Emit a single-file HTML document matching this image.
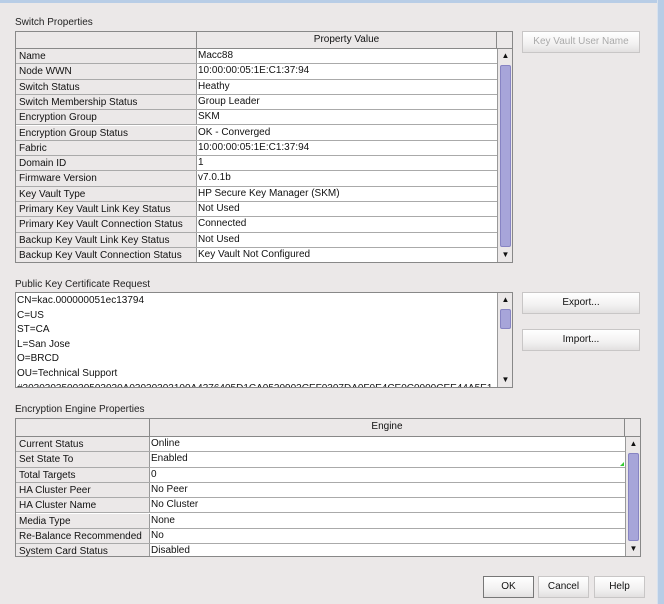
<!DOCTYPE html>
<html><head><style>
body{margin:0;width:664px;height:604px;background:#ebe8e8;position:relative;overflow:hidden;font-family:"Liberation Sans",sans-serif;font-size:10px;color:#111}
.a{position:absolute}
.lbl{position:absolute;font-size:10px;color:#222}
.tbl{position:absolute;border:1px solid #888;background:#fff;overflow:hidden}
.hdr{position:absolute;left:0;top:0;height:16px;background:#ebe8e8;border-bottom:1px solid #888;text-align:center;line-height:16px}
.row{position:absolute;left:0;height:15.3px;box-sizing:border-box;border-bottom:1px solid #aaa;line-height:14px;white-space:nowrap}
.n{position:absolute;left:0;top:0;bottom:0;background:#ebe8e8;border-right:1px solid #999;padding-left:3px;box-sizing:border-box;padding-top:1px}
.v{position:absolute;top:0;bottom:0;padding-left:1px}
.sb{position:absolute;background:#ebe8e8;border-left:1px solid #999}
.thumb{position:absolute;left:2px;right:2px;background:#a7a5d9;border:1px solid #8784c3;border-radius:2px}
.arr{position:absolute;left:0;right:0;height:14px;font-size:8px;text-align:center;line-height:14px}
.btn{position:absolute;background:linear-gradient(#fff,#f2f1f1 60%,#e2e0e0);border:1px solid #c8c6c6;text-align:center;font-size:10px;box-sizing:border-box}
</style></head><body>
<div class="a" style="left:0;top:0;width:664px;height:3px;background:#b8cde6"></div>
<div class="a" style="left:657px;top:0;width:7px;height:604px;background:#b8cde6;border-left:1px solid #d8e2ee"></div>

<div class="lbl" style="left:15px;top:17px">Switch Properties</div>
<div class="tbl" style="left:15px;top:31px;width:496px;height:230px">
<div class="hdr" style="width:180px;border-right:1px solid #888"></div>
<div class="hdr" style="left:181px;width:299px;border-right:1px solid #888">Property Value</div>
<div class="hdr" style="left:481px;width:16px"></div>
<div style="position:absolute;left:0;top:17px;width:481px">
<div class="row" style="top:0;width:481px"><div class="n" style="width:181px">Name</div><div class="v" style="left:181px">Macc88</div></div>
<div class="row" style="top:15.3px;width:481px"><div class="n" style="width:181px">Node WWN</div><div class="v" style="left:181px">10:00:00:05:1E:C1:37:94</div></div>
<div class="row" style="top:30.6px;width:481px"><div class="n" style="width:181px">Switch Status</div><div class="v" style="left:181px">Heathy</div></div>
<div class="row" style="top:45.9px;width:481px"><div class="n" style="width:181px">Switch Membership Status</div><div class="v" style="left:181px">Group Leader</div></div>
<div class="row" style="top:61.2px;width:481px"><div class="n" style="width:181px">Encryption Group</div><div class="v" style="left:181px">SKM</div></div>
<div class="row" style="top:76.5px;width:481px"><div class="n" style="width:181px">Encryption Group Status</div><div class="v" style="left:181px">OK - Converged</div></div>
<div class="row" style="top:91.8px;width:481px"><div class="n" style="width:181px">Fabric</div><div class="v" style="left:181px">10:00:00:05:1E:C1:37:94</div></div>
<div class="row" style="top:107.1px;width:481px"><div class="n" style="width:181px">Domain ID</div><div class="v" style="left:181px">1</div></div>
<div class="row" style="top:122.4px;width:481px"><div class="n" style="width:181px">Firmware Version</div><div class="v" style="left:181px">v7.0.1b</div></div>
<div class="row" style="top:137.7px;width:481px"><div class="n" style="width:181px">Key Vault Type</div><div class="v" style="left:181px">HP Secure Key Manager (SKM)</div></div>
<div class="row" style="top:153px;width:481px"><div class="n" style="width:181px">Primary Key Vault Link Key Status</div><div class="v" style="left:181px">Not Used</div></div>
<div class="row" style="top:168.3px;width:481px"><div class="n" style="width:181px">Primary Key Vault Connection Status</div><div class="v" style="left:181px">Connected</div></div>
<div class="row" style="top:183.6px;width:481px"><div class="n" style="width:181px">Backup Key Vault Link Key Status</div><div class="v" style="left:181px">Not Used</div></div>
<div class="row" style="top:198.9px;width:481px;border-bottom:none"><div class="n" style="width:181px">Backup Key Vault Connection Status</div><div class="v" style="left:181px">Key Vault Not Configured</div></div>
</div>
<div class="sb" style="left:481px;top:17px;width:15px;height:213px">
<div class="arr" style="top:0">▲</div><div class="thumb" style="top:16px;height:180px"></div><div class="arr" style="bottom:0">▼</div></div>
</div>
<div class="btn" style="left:522px;top:31px;width:118px;height:22px;line-height:20px;color:#aaa">Key Vault User Name</div>

<div class="lbl" style="left:15px;top:279px">Public Key Certificate Request</div>
<div class="tbl" style="left:15px;top:292px;width:496px;height:94px;line-height:14.6px">
<div style="position:absolute;left:1px;top:1px;white-space:nowrap">CN=kac.000000051ec13794<br>C=US<br>ST=CA<br>L=San Jose<br>O=BRCD<br>OU=Technical Support<br>#303030350030503030A03030303100A4376405D1CA0520903CEF0307DA0F0E4CE0C0000CEE44A5E1</div>
<div class="sb" style="left:481px;top:0;width:15px;height:94px">
<div class="arr" style="top:0">▲</div><div class="thumb" style="top:16px;height:18px"></div><div class="arr" style="bottom:0">▼</div></div>
</div>
<div class="btn" style="left:522px;top:292px;width:118px;height:22px;line-height:20px">Export...</div>
<div class="btn" style="left:522px;top:329px;width:118px;height:22px;line-height:20px">Import...</div>

<div class="lbl" style="left:15px;top:404px">Encryption Engine Properties</div>
<div class="tbl" style="left:15px;top:418px;width:624px;height:137px">
<div class="hdr" style="width:133px;border-right:1px solid #888;height:17px"></div>
<div class="hdr" style="left:134px;width:474px;border-right:1px solid #888;height:17px">Engine</div>
<div class="hdr" style="left:609px;width:16px;height:17px"></div>
<div style="position:absolute;left:0;top:18px;width:609px">
<div class="row" style="top:0;width:609px"><div class="n" style="width:134px">Current Status</div><div class="v" style="left:134px">Online</div></div>
<div class="row" style="top:15.3px;width:609px"><div class="n" style="width:134px">Set State To</div><div class="v" style="left:134px">Enabled</div><div style="position:absolute;right:1px;bottom:1px;width:0;height:0;border-left:4px solid transparent;border-bottom:4px solid #3c3"></div></div>
<div class="row" style="top:30.6px;width:609px"><div class="n" style="width:134px">Total Targets</div><div class="v" style="left:134px">0</div></div>
<div class="row" style="top:45.9px;width:609px"><div class="n" style="width:134px">HA Cluster Peer</div><div class="v" style="left:134px">No Peer</div></div>
<div class="row" style="top:61.2px;width:609px"><div class="n" style="width:134px">HA Cluster Name</div><div class="v" style="left:134px">No Cluster</div></div>
<div class="row" style="top:76.5px;width:609px"><div class="n" style="width:134px">Media Type</div><div class="v" style="left:134px">None</div></div>
<div class="row" style="top:91.8px;width:609px"><div class="n" style="width:134px">Re-Balance Recommended</div><div class="v" style="left:134px">No</div></div>
<div class="row" style="top:107.1px;width:609px;border-bottom:none"><div class="n" style="width:134px">System Card Status</div><div class="v" style="left:134px">Disabled</div></div>
</div>
<div class="sb" style="left:609px;top:18px;width:15px;height:119px">
<div class="arr" style="top:0">▲</div><div class="thumb" style="top:16px;height:86px"></div><div class="arr" style="bottom:0">▼</div></div>
</div>

<div class="btn" style="left:483px;top:576px;width:51px;height:22px;line-height:20px;border:1px solid #777">OK</div>
<div class="btn" style="left:538px;top:576px;width:51px;height:22px;line-height:20px">Cancel</div>
<div class="btn" style="left:594px;top:576px;width:51px;height:22px;line-height:20px">Help</div>
</body></html>
